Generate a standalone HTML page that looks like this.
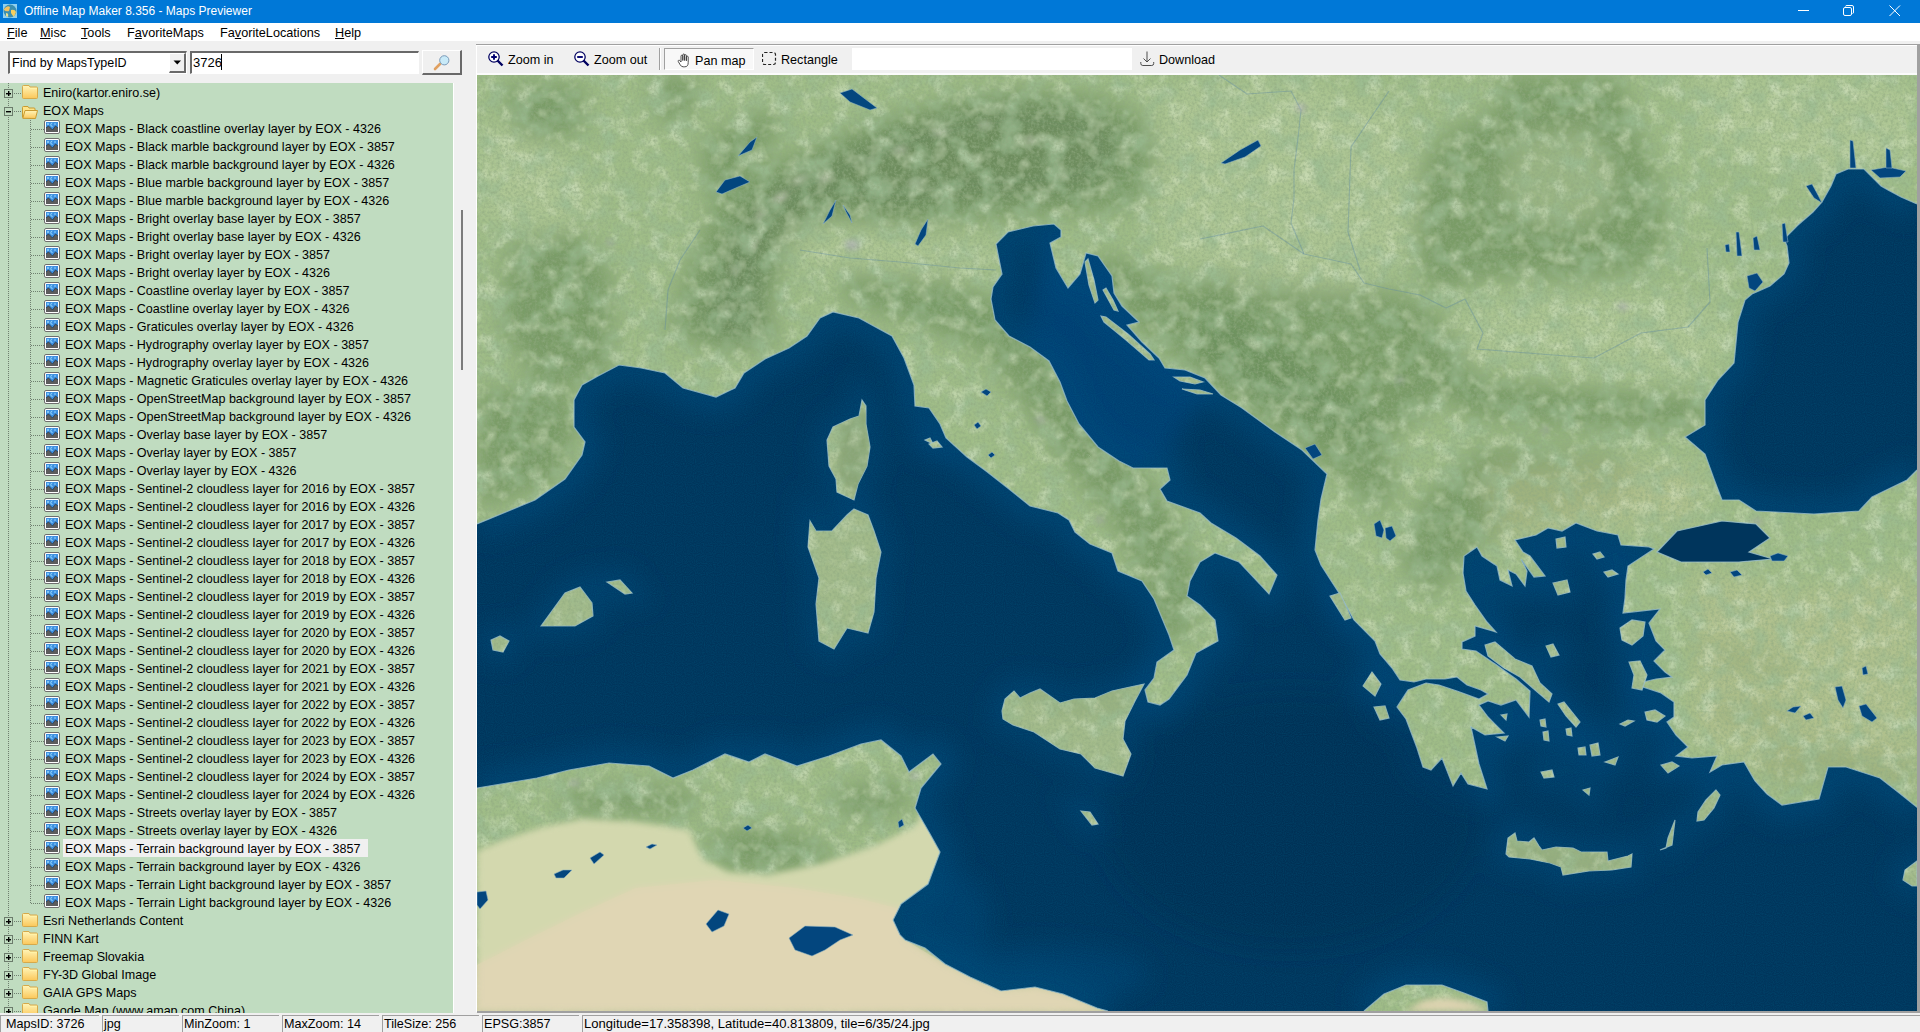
<!DOCTYPE html>
<html><head><meta charset="utf-8">
<style>
*{margin:0;padding:0;box-sizing:border-box}
html,body{width:1920px;height:1032px;overflow:hidden;background:#f0f0f0;font-family:"Liberation Sans",sans-serif;color:#000;position:relative}
.a{position:absolute}
#title{left:0;top:0;width:1920px;height:23px;background:#0078d7}
#title .tx{left:24px;top:4px;font-size:12px;color:#fff;white-space:pre}
#menu{left:0;top:23px;width:1920px;height:18px;background:#fff}
#menu span{position:absolute;top:3px;font-size:12.7px;white-space:pre}
u{text-decoration:underline;text-underline-offset:1px}
#tree{left:0;top:83px;width:453px;height:930px;background:#c0dcc0;overflow:hidden}
.r{position:absolute;left:0;width:453px;height:18px;margin-top:-83px}
.t{position:absolute;top:3px;font-size:12.55px;white-space:pre;line-height:14px}
.t.sel{background:#f0f0f0;left:63px!important;padding-left:2px;top:0;padding-top:3px;height:18px;width:305px}
.bx{position:absolute;left:4px;top:6px;width:9px;height:9px;border:1px solid #6b7b6b;background:#c0dcc0}
.bx .h{position:absolute;left:1px;top:3px;width:5px;height:1px;background:#000;box-shadow:0 0.4px 0 #000}
.bx .v{position:absolute;left:3px;top:1px;width:1px;height:5px;background:#000;box-shadow:0.4px 0 0 #000}
.hd{position:absolute;top:10px;height:1px;background-image:linear-gradient(90deg,#6f7f6f 50%,transparent 50%);background-size:2px 1px}
.ic{position:absolute}
#map{left:477px;top:75px;width:1441px;height:936px;overflow:hidden}
#status span{position:absolute;top:1017px;font-size:12.6px;white-space:pre;line-height:14px}
.sp{position:absolute;top:1015px;height:17px;border-top:1px solid #a0a0a0;border-left:1px solid #a0a0a0}
.tb span{position:absolute;font-size:12.6px;white-space:pre;top:53px}
</style></head><body>
<div id="title" class="a">
 <svg class="a" style="left:3px;top:4px" width="14" height="14" viewBox="0 0 14 14"><rect width="14" height="14" fill="#8fd0f0"/><circle cx="7" cy="7" r="6.5" fill="#3b8fb0"/><path d="M1 5 Q4 1 7 3 L6 7 Q3 8 1 6Z" fill="#f2c060"/><path d="M8 6 Q12 5 13 8 L11 13 Q9 11 8 9Z" fill="#f6d060"/><path d="M3 9 Q6 9 5 13 L3 12Z" fill="#e9e090"/></svg>
 <span class="a tx">Offline Map Maker 8.356 - Maps Previewer</span>
 <svg class="a" style="left:1798px;top:5px" width="14" height="12"><rect x="0" y="5" width="11" height="1" fill="#fff"/></svg>
 <svg class="a" style="left:1842px;top:4px" width="14" height="14"><rect x="1.5" y="3.5" width="8" height="8" rx="1.5" fill="none" stroke="#fff"/><path d="M3.5 2.5 Q3.5 1.5 5 1.5 L10 1.5 Q11.5 1.5 11.5 3 L11.5 8 Q11.5 9.5 10.5 9.5" fill="none" stroke="#fff"/></svg>
 <svg class="a" style="left:1889px;top:5px" width="14" height="14"><path d="M0.5 0.5 L11 11 M11 0.5 L0.5 11" stroke="#fff" stroke-width="1"/></svg>
</div>
<div id="menu" class="a">
 <span style="left:7px"><u>F</u>ile</span>
 <span style="left:40px"><u>M</u>isc</span>
 <span style="left:81px"><u>T</u>ools</span>
 <span style="left:127px">F<u>a</u>voriteMaps</span>
 <span style="left:220px">Fa<u>v</u>oriteLocations</span>
 <span style="left:335px"><u>H</u>elp</span>
</div>

<!-- left search -->
<div class="a" style="left:8px;top:51px;width:179px;height:23px;background:#fff;border-top:2px solid #696969;border-left:2px solid #696969;border-bottom:1px solid #fff;border-right:1px solid #fff"></div>
<span class="a" style="left:12px;top:56px;font-size:12.5px;white-space:pre">Find by MapsTypeID</span>
<div class="a" style="left:169px;top:53px;width:17px;height:20px;background:#f0f0f0;border-right:2px solid #696969;border-bottom:2px solid #696969;border-top:1px solid #fff;border-left:1px solid #fff"></div>
<svg class="a" style="left:173px;top:60px" width="9" height="5"><path d="M0.5 0.5 L8 0.5 L4.25 4.5Z" fill="#000"/></svg>
<div class="a" style="left:190px;top:51px;width:229px;height:23px;background:#fff;border-top:2px solid #696969;border-left:2px solid #696969;border-bottom:1px solid #fff;border-right:1px solid #fff"></div>
<span class="a" style="left:193px;top:55px;font-size:13px;white-space:pre">3726</span>
<div class="a" style="left:221px;top:54px;width:1px;height:16px;background:#000"></div>
<div class="a" style="left:422px;top:50px;width:40px;height:25px;background:#f0f0f0;border-top:1px solid #fff;border-left:1px solid #fff;border-right:2px solid #696969;border-bottom:2px solid #696969"></div>
<svg class="a" style="left:433px;top:54px" width="18" height="18" viewBox="0 0 18 18"><line x1="2" y1="15" x2="7" y2="10" stroke="#e0a060" stroke-width="2.6" stroke-linecap="round"/><circle cx="11.3" cy="6.3" r="4.6" fill="#c8eaf8" stroke="#7a9ab8" stroke-width="1"/></svg>

<div id="tree" class="a">
<div class="a" style="left:8px;top:0px;width:1px;height:930px;background-image:linear-gradient(#6f7f6f 50%,transparent 50%);background-size:1px 2px"></div>
<div class="a" style="left:30px;top:35px;width:1px;height:786px;background-image:linear-gradient(#6f7f6f 50%,transparent 50%);background-size:1px 2px"></div>
<svg width="0" height="0" style="position:absolute"><defs>
<linearGradient id="fg" x1="0" y1="0" x2="0" y2="1"><stop offset="0" stop-color="#fff5b8"/><stop offset="1" stop-color="#fbc75a"/></linearGradient>
<symbol id="fc" viewBox="0 0 16 14"><path d="M0.5 1.5 Q0.5 0.5 1.5 0.5 L7 0.5 L8 2 L14.5 2 Q15.5 2 15.5 3 L15.5 12.5 Q15.5 13.5 14.5 13.5 L1.5 13.5 Q0.5 13.5 0.5 12.5Z" fill="url(#fg)" stroke="#d6a94a"/><path d="M8 3.5 H15" stroke="#fff3a8" stroke-width="1"/></symbol>
<symbol id="fo" viewBox="0 0 16 13"><path d="M0.5 11.5 L0.5 1.5 Q0.5 0.5 1.5 0.5 L6 0.5 L7 2 L12 2 Q13 2 13 3 L13 4.5" fill="#fde48a" stroke="#c89a30"/><path d="M0.8 12.3 L3 4.5 L15.5 4.5 L13.5 12.5 Z" fill="url(#fg)" stroke="#c89a30"/></symbol>
<symbol id="im" viewBox="0 0 16 14"><rect x="0.5" y="0.5" width="15" height="13" rx="1.5" fill="#fff" stroke="#6e6e6e"/><rect x="2" y="2" width="12" height="10" fill="#3d8fe0"/><path d="M2 12 L2 8 L4.5 6 L8.5 10 L11.5 6 L14 8 L14 12Z" fill="#5c5c5c"/><path d="M2 8 L4.5 6 L8.5 10 L11.5 6 L14 8" fill="none" stroke="#2a3a4a" stroke-width="0.8"/><circle cx="4" cy="4" r="0.9" fill="#9fe0ff"/><path d="M8.3 3 A1.6 1.6 0 1 0 8.6 6.4" fill="none" stroke="#9fe0ff" stroke-width="0.9"/><circle cx="11" cy="4" r="0.8" fill="#9fe0ff"/></symbol>
</defs></svg>
<div class="r" style="top:83px"><i class="bx"><b class="h"></b><b class=v></b></i><i class="hd" style="left:14px;width:8px"></i><svg class="ic" style="left:22px;top:2px" width="16" height="14"><use href="#fc"/></svg><span class="t" style="left:43px">Eniro(kartor.eniro.se)</span></div>
<div class="r" style="top:101px"><i class="bx"><b class="h"></b></i><i class="hd" style="left:14px;width:8px"></i><svg class="ic" style="left:22px;top:5px" width="16" height="13"><use href="#fo"/></svg><span class="t" style="left:43px">EOX Maps</span></div>
<div class="r" style="top:119px"><i class="hd" style="left:31px;width:13px"></i><svg class="ic" style="left:44px;top:1px" width="16" height="14"><use href="#im"/></svg><span class="t" style="left:65px">EOX Maps - Black coastline overlay layer by EOX - 4326</span></div>
<div class="r" style="top:137px"><i class="hd" style="left:31px;width:13px"></i><svg class="ic" style="left:44px;top:1px" width="16" height="14"><use href="#im"/></svg><span class="t" style="left:65px">EOX Maps - Black marble background layer by EOX - 3857</span></div>
<div class="r" style="top:155px"><i class="hd" style="left:31px;width:13px"></i><svg class="ic" style="left:44px;top:1px" width="16" height="14"><use href="#im"/></svg><span class="t" style="left:65px">EOX Maps - Black marble background layer by EOX - 4326</span></div>
<div class="r" style="top:173px"><i class="hd" style="left:31px;width:13px"></i><svg class="ic" style="left:44px;top:1px" width="16" height="14"><use href="#im"/></svg><span class="t" style="left:65px">EOX Maps - Blue marble background layer by EOX - 3857</span></div>
<div class="r" style="top:191px"><i class="hd" style="left:31px;width:13px"></i><svg class="ic" style="left:44px;top:1px" width="16" height="14"><use href="#im"/></svg><span class="t" style="left:65px">EOX Maps - Blue marble background layer by EOX - 4326</span></div>
<div class="r" style="top:209px"><i class="hd" style="left:31px;width:13px"></i><svg class="ic" style="left:44px;top:1px" width="16" height="14"><use href="#im"/></svg><span class="t" style="left:65px">EOX Maps - Bright overlay base layer by EOX - 3857</span></div>
<div class="r" style="top:227px"><i class="hd" style="left:31px;width:13px"></i><svg class="ic" style="left:44px;top:1px" width="16" height="14"><use href="#im"/></svg><span class="t" style="left:65px">EOX Maps - Bright overlay base layer by EOX - 4326</span></div>
<div class="r" style="top:245px"><i class="hd" style="left:31px;width:13px"></i><svg class="ic" style="left:44px;top:1px" width="16" height="14"><use href="#im"/></svg><span class="t" style="left:65px">EOX Maps - Bright overlay layer by EOX - 3857</span></div>
<div class="r" style="top:263px"><i class="hd" style="left:31px;width:13px"></i><svg class="ic" style="left:44px;top:1px" width="16" height="14"><use href="#im"/></svg><span class="t" style="left:65px">EOX Maps - Bright overlay layer by EOX - 4326</span></div>
<div class="r" style="top:281px"><i class="hd" style="left:31px;width:13px"></i><svg class="ic" style="left:44px;top:1px" width="16" height="14"><use href="#im"/></svg><span class="t" style="left:65px">EOX Maps - Coastline overlay layer by EOX - 3857</span></div>
<div class="r" style="top:299px"><i class="hd" style="left:31px;width:13px"></i><svg class="ic" style="left:44px;top:1px" width="16" height="14"><use href="#im"/></svg><span class="t" style="left:65px">EOX Maps - Coastline overlay layer by EOX - 4326</span></div>
<div class="r" style="top:317px"><i class="hd" style="left:31px;width:13px"></i><svg class="ic" style="left:44px;top:1px" width="16" height="14"><use href="#im"/></svg><span class="t" style="left:65px">EOX Maps - Graticules overlay layer by EOX - 4326</span></div>
<div class="r" style="top:335px"><i class="hd" style="left:31px;width:13px"></i><svg class="ic" style="left:44px;top:1px" width="16" height="14"><use href="#im"/></svg><span class="t" style="left:65px">EOX Maps - Hydrography overlay layer by EOX - 3857</span></div>
<div class="r" style="top:353px"><i class="hd" style="left:31px;width:13px"></i><svg class="ic" style="left:44px;top:1px" width="16" height="14"><use href="#im"/></svg><span class="t" style="left:65px">EOX Maps - Hydrography overlay layer by EOX - 4326</span></div>
<div class="r" style="top:371px"><i class="hd" style="left:31px;width:13px"></i><svg class="ic" style="left:44px;top:1px" width="16" height="14"><use href="#im"/></svg><span class="t" style="left:65px">EOX Maps - Magnetic Graticules overlay layer by EOX - 4326</span></div>
<div class="r" style="top:389px"><i class="hd" style="left:31px;width:13px"></i><svg class="ic" style="left:44px;top:1px" width="16" height="14"><use href="#im"/></svg><span class="t" style="left:65px">EOX Maps - OpenStreetMap background layer by EOX - 3857</span></div>
<div class="r" style="top:407px"><i class="hd" style="left:31px;width:13px"></i><svg class="ic" style="left:44px;top:1px" width="16" height="14"><use href="#im"/></svg><span class="t" style="left:65px">EOX Maps - OpenStreetMap background layer by EOX - 4326</span></div>
<div class="r" style="top:425px"><i class="hd" style="left:31px;width:13px"></i><svg class="ic" style="left:44px;top:1px" width="16" height="14"><use href="#im"/></svg><span class="t" style="left:65px">EOX Maps - Overlay base layer by EOX - 3857</span></div>
<div class="r" style="top:443px"><i class="hd" style="left:31px;width:13px"></i><svg class="ic" style="left:44px;top:1px" width="16" height="14"><use href="#im"/></svg><span class="t" style="left:65px">EOX Maps - Overlay layer by EOX - 3857</span></div>
<div class="r" style="top:461px"><i class="hd" style="left:31px;width:13px"></i><svg class="ic" style="left:44px;top:1px" width="16" height="14"><use href="#im"/></svg><span class="t" style="left:65px">EOX Maps - Overlay layer by EOX - 4326</span></div>
<div class="r" style="top:479px"><i class="hd" style="left:31px;width:13px"></i><svg class="ic" style="left:44px;top:1px" width="16" height="14"><use href="#im"/></svg><span class="t" style="left:65px">EOX Maps - Sentinel-2 cloudless layer for 2016 by EOX - 3857</span></div>
<div class="r" style="top:497px"><i class="hd" style="left:31px;width:13px"></i><svg class="ic" style="left:44px;top:1px" width="16" height="14"><use href="#im"/></svg><span class="t" style="left:65px">EOX Maps - Sentinel-2 cloudless layer for 2016 by EOX - 4326</span></div>
<div class="r" style="top:515px"><i class="hd" style="left:31px;width:13px"></i><svg class="ic" style="left:44px;top:1px" width="16" height="14"><use href="#im"/></svg><span class="t" style="left:65px">EOX Maps - Sentinel-2 cloudless layer for 2017 by EOX - 3857</span></div>
<div class="r" style="top:533px"><i class="hd" style="left:31px;width:13px"></i><svg class="ic" style="left:44px;top:1px" width="16" height="14"><use href="#im"/></svg><span class="t" style="left:65px">EOX Maps - Sentinel-2 cloudless layer for 2017 by EOX - 4326</span></div>
<div class="r" style="top:551px"><i class="hd" style="left:31px;width:13px"></i><svg class="ic" style="left:44px;top:1px" width="16" height="14"><use href="#im"/></svg><span class="t" style="left:65px">EOX Maps - Sentinel-2 cloudless layer for 2018 by EOX - 3857</span></div>
<div class="r" style="top:569px"><i class="hd" style="left:31px;width:13px"></i><svg class="ic" style="left:44px;top:1px" width="16" height="14"><use href="#im"/></svg><span class="t" style="left:65px">EOX Maps - Sentinel-2 cloudless layer for 2018 by EOX - 4326</span></div>
<div class="r" style="top:587px"><i class="hd" style="left:31px;width:13px"></i><svg class="ic" style="left:44px;top:1px" width="16" height="14"><use href="#im"/></svg><span class="t" style="left:65px">EOX Maps - Sentinel-2 cloudless layer for 2019 by EOX - 3857</span></div>
<div class="r" style="top:605px"><i class="hd" style="left:31px;width:13px"></i><svg class="ic" style="left:44px;top:1px" width="16" height="14"><use href="#im"/></svg><span class="t" style="left:65px">EOX Maps - Sentinel-2 cloudless layer for 2019 by EOX - 4326</span></div>
<div class="r" style="top:623px"><i class="hd" style="left:31px;width:13px"></i><svg class="ic" style="left:44px;top:1px" width="16" height="14"><use href="#im"/></svg><span class="t" style="left:65px">EOX Maps - Sentinel-2 cloudless layer for 2020 by EOX - 3857</span></div>
<div class="r" style="top:641px"><i class="hd" style="left:31px;width:13px"></i><svg class="ic" style="left:44px;top:1px" width="16" height="14"><use href="#im"/></svg><span class="t" style="left:65px">EOX Maps - Sentinel-2 cloudless layer for 2020 by EOX - 4326</span></div>
<div class="r" style="top:659px"><i class="hd" style="left:31px;width:13px"></i><svg class="ic" style="left:44px;top:1px" width="16" height="14"><use href="#im"/></svg><span class="t" style="left:65px">EOX Maps - Sentinel-2 cloudless layer for 2021 by EOX - 3857</span></div>
<div class="r" style="top:677px"><i class="hd" style="left:31px;width:13px"></i><svg class="ic" style="left:44px;top:1px" width="16" height="14"><use href="#im"/></svg><span class="t" style="left:65px">EOX Maps - Sentinel-2 cloudless layer for 2021 by EOX - 4326</span></div>
<div class="r" style="top:695px"><i class="hd" style="left:31px;width:13px"></i><svg class="ic" style="left:44px;top:1px" width="16" height="14"><use href="#im"/></svg><span class="t" style="left:65px">EOX Maps - Sentinel-2 cloudless layer for 2022 by EOX - 3857</span></div>
<div class="r" style="top:713px"><i class="hd" style="left:31px;width:13px"></i><svg class="ic" style="left:44px;top:1px" width="16" height="14"><use href="#im"/></svg><span class="t" style="left:65px">EOX Maps - Sentinel-2 cloudless layer for 2022 by EOX - 4326</span></div>
<div class="r" style="top:731px"><i class="hd" style="left:31px;width:13px"></i><svg class="ic" style="left:44px;top:1px" width="16" height="14"><use href="#im"/></svg><span class="t" style="left:65px">EOX Maps - Sentinel-2 cloudless layer for 2023 by EOX - 3857</span></div>
<div class="r" style="top:749px"><i class="hd" style="left:31px;width:13px"></i><svg class="ic" style="left:44px;top:1px" width="16" height="14"><use href="#im"/></svg><span class="t" style="left:65px">EOX Maps - Sentinel-2 cloudless layer for 2023 by EOX - 4326</span></div>
<div class="r" style="top:767px"><i class="hd" style="left:31px;width:13px"></i><svg class="ic" style="left:44px;top:1px" width="16" height="14"><use href="#im"/></svg><span class="t" style="left:65px">EOX Maps - Sentinel-2 cloudless layer for 2024 by EOX - 3857</span></div>
<div class="r" style="top:785px"><i class="hd" style="left:31px;width:13px"></i><svg class="ic" style="left:44px;top:1px" width="16" height="14"><use href="#im"/></svg><span class="t" style="left:65px">EOX Maps - Sentinel-2 cloudless layer for 2024 by EOX - 4326</span></div>
<div class="r" style="top:803px"><i class="hd" style="left:31px;width:13px"></i><svg class="ic" style="left:44px;top:1px" width="16" height="14"><use href="#im"/></svg><span class="t" style="left:65px">EOX Maps - Streets overlay layer by EOX - 3857</span></div>
<div class="r" style="top:821px"><i class="hd" style="left:31px;width:13px"></i><svg class="ic" style="left:44px;top:1px" width="16" height="14"><use href="#im"/></svg><span class="t" style="left:65px">EOX Maps - Streets overlay layer by EOX - 4326</span></div>
<div class="r" style="top:839px"><i class="hd" style="left:31px;width:13px"></i><svg class="ic" style="left:44px;top:1px" width="16" height="14"><use href="#im"/></svg><span class="t sel" style="left:65px">EOX Maps - Terrain background layer by EOX - 3857</span></div>
<div class="r" style="top:857px"><i class="hd" style="left:31px;width:13px"></i><svg class="ic" style="left:44px;top:1px" width="16" height="14"><use href="#im"/></svg><span class="t" style="left:65px">EOX Maps - Terrain background layer by EOX - 4326</span></div>
<div class="r" style="top:875px"><i class="hd" style="left:31px;width:13px"></i><svg class="ic" style="left:44px;top:1px" width="16" height="14"><use href="#im"/></svg><span class="t" style="left:65px">EOX Maps - Terrain Light background layer by EOX - 3857</span></div>
<div class="r" style="top:893px"><i class="hd" style="left:31px;width:13px"></i><svg class="ic" style="left:44px;top:1px" width="16" height="14"><use href="#im"/></svg><span class="t" style="left:65px">EOX Maps - Terrain Light background layer by EOX - 4326</span></div>
<div class="r" style="top:911px"><i class="bx"><b class="h"></b><b class=v></b></i><i class="hd" style="left:14px;width:8px"></i><svg class="ic" style="left:22px;top:2px" width="16" height="14"><use href="#fc"/></svg><span class="t" style="left:43px">Esri Netherlands Content</span></div>
<div class="r" style="top:929px"><i class="bx"><b class="h"></b><b class=v></b></i><i class="hd" style="left:14px;width:8px"></i><svg class="ic" style="left:22px;top:2px" width="16" height="14"><use href="#fc"/></svg><span class="t" style="left:43px">FINN Kart</span></div>
<div class="r" style="top:947px"><i class="bx"><b class="h"></b><b class=v></b></i><i class="hd" style="left:14px;width:8px"></i><svg class="ic" style="left:22px;top:2px" width="16" height="14"><use href="#fc"/></svg><span class="t" style="left:43px">Freemap Slovakia</span></div>
<div class="r" style="top:965px"><i class="bx"><b class="h"></b><b class=v></b></i><i class="hd" style="left:14px;width:8px"></i><svg class="ic" style="left:22px;top:2px" width="16" height="14"><use href="#fc"/></svg><span class="t" style="left:43px">FY-3D Global Image</span></div>
<div class="r" style="top:983px"><i class="bx"><b class="h"></b><b class=v></b></i><i class="hd" style="left:14px;width:8px"></i><svg class="ic" style="left:22px;top:2px" width="16" height="14"><use href="#fc"/></svg><span class="t" style="left:43px">GAIA GPS Maps</span></div>
<div class="r" style="top:1001px"><i class="bx"><b class="h"></b><b class=v></b></i><i class="hd" style="left:14px;width:8px"></i><svg class="ic" style="left:22px;top:2px" width="16" height="14"><use href="#fc"/></svg><span class="t" style="left:43px">Gaode Map (www.amap.com China)</span></div>
</div>
</div>
<div class="a" style="left:453px;top:83px;width:1px;height:930px;background:#fff"></div>
<div class="a" style="left:461px;top:210px;width:2px;height:160px;background:#7c7c7c"></div>

<!-- right toolbar -->
<div class="a" style="left:476px;top:44px;width:1444px;height:1px;background:#a0a0a0"></div>
<div class="a" style="left:476px;top:45px;width:1444px;height:1px;background:#fff"></div>
<div class="tb">
<svg class="a" style="left:488px;top:51px" width="16" height="16" viewBox="0 0 16 16"><circle cx="6" cy="6" r="5.2" fill="#fff" stroke="#000060" stroke-width="1.25"/><path d="M3.2 6 H8.8 M6 3.2 V8.8" stroke="#000070" stroke-width="1.9"/><line x1="9.5" y1="9.5" x2="14.5" y2="14.5" stroke="#000060" stroke-width="2.4"/></svg>
<span style="left:508px">Zoom in</span>
<svg class="a" style="left:574px;top:51px" width="16" height="16" viewBox="0 0 16 16"><circle cx="6" cy="6" r="5.2" fill="#fff" stroke="#000060" stroke-width="1.25"/><path d="M3.2 6 H8.8" stroke="#000070" stroke-width="1.9"/><line x1="9.5" y1="9.5" x2="14.5" y2="14.5" stroke="#000060" stroke-width="2.4"/></svg>
<span style="left:594px">Zoom out</span>
<div class="a" style="left:659px;top:48px;width:1px;height:22px;background:#a0a0a0"></div>
<div class="a" style="left:660px;top:48px;width:1px;height:22px;background:#fff"></div>
<div class="a" style="left:664px;top:48px;width:90px;height:22px;background:#f8f8f8;border-top:1px solid #a0a0a0;border-left:1px solid #a0a0a0;border-right:1px solid #fff;border-bottom:1px solid #fff"></div>
<svg class="a" style="left:677px;top:53px" width="13" height="15" viewBox="0 0 13 15"><path d="M4 9 L4 3.2 Q4 2.2 4.9 2.2 Q5.8 2.2 5.8 3.2 L5.8 7.5 L5.8 2 Q5.8 1 6.7 1 Q7.6 1 7.6 2 L7.6 7.5 L7.6 2.6 Q7.6 1.7 8.5 1.7 Q9.4 1.7 9.4 2.6 L9.4 7.8 L9.4 4 Q9.4 3.2 10.3 3.2 Q11.2 3.2 11.2 4 L11.2 9.5 Q11.2 13.8 7.8 13.8 L6.2 13.8 Q4.3 13.8 3.2 11.8 L1.3 8.6 Q0.8 7.6 1.6 7.3 Q2.4 7 3.1 7.9 Z" fill="#fff" stroke="#3a3a3a" stroke-width="0.9" stroke-linejoin="round"/></svg>
<span style="left:695px;top:54px">Pan map</span>
<svg class="a" style="left:762px;top:52px" width="15" height="14"><rect x="0.5" y="0.5" width="13" height="12" rx="2" fill="none" stroke="#222" stroke-width="1.2" stroke-dasharray="3 2"/></svg>
<span style="left:781px">Rectangle</span>
<div class="a" style="left:852px;top:48px;width:280px;height:22px;background:#fff"></div>
<svg class="a" style="left:1140px;top:51px" width="15" height="16" viewBox="0 0 15 16"><path d="M7 0.5 V11 M3.5 7.5 L7 11 L10.5 7.5 M0.8 11 V12.5 Q0.8 14.5 2.8 14.5 L11.7 14.5 Q13.7 14.5 13.7 12.5 V11" fill="none" stroke="#444" stroke-width="0.95"/></svg>
<span style="left:1159px">Download</span>
</div>

<div class="a" style="left:476px;top:73px;width:1442px;height:2px;background:#fbfbfb"></div>
<div id="map" class="a">
<svg width="1441" height="936" viewBox="477 75 1441 936" style="display:block">
<defs>
<filter id="bl" x="-50%" y="-50%" width="200%" height="200%"><feGaussianBlur stdDeviation="12"/></filter>
<filter id="bl2" x="-50%" y="-50%" width="200%" height="200%"><feGaussianBlur stdDeviation="3"/></filter>
<filter id="mt" x="0" y="0" width="100%" height="100%"><feTurbulence type="fractalNoise" baseFrequency="0.045" numOctaves="3" seed="7"/><feColorMatrix type="matrix" values="0 0 0 0 0.33  0 0 0 0 0.50  0 0 0 0 0.29  3.2 0 0 0 -1.45"/></filter>
<filter id="sn" x="0" y="0" width="100%" height="100%"><feTurbulence type="fractalNoise" baseFrequency="0.9" numOctaves="1" seed="11"/><feColorMatrix type="matrix" values="0 0 0 0 0.0  0 0 0 0 0.15  0 0 0 0 0.28  0.45 0 0 0 -0.15"/></filter>
<filter id="lt" x="0" y="0" width="100%" height="100%"><feTurbulence type="fractalNoise" baseFrequency="0.06" numOctaves="3" seed="21"/><feColorMatrix type="matrix" values="0 0 0 0 0.76  0 0 0 0 0.85  0 0 0 0 0.64  3.0 0 0 0 -1.45"/></filter>
<filter id="nz" x="0" y="0" width="100%" height="100%"><feTurbulence type="fractalNoise" baseFrequency="0.35" numOctaves="3" seed="3"/><feColorMatrix type="matrix" values="0 0 0 0 0.28  0 0 0 0 0.40  0 0 0 0 0.22  1.6 0 0 0 -0.62"/></filter>
</defs>
<rect x="477" y="75" width="1441" height="936" fill="#a0bd88"/>
<g filter="url(#bl)">
<polygon points="666,334 680,290 691,258 721,191 782,160 874,121 960,98 1017,90 1100,95 1150,120 1160,170 1142,207 1080,215 1017,218 904,228 828,218 782,252 767,319 782,344 721,350" fill="#6b8f5c" opacity="0.72"/>
<polygon points="700,140 760,110 790,120 740,180 705,200" fill="#6b8f5c" opacity="0.72"/>
<polygon points="501,84 584,84 584,136 520,140" fill="#6b8f5c" opacity="0.72"/>
<polygon points="650,75 700,75 690,120 660,125" fill="#6b8f5c" opacity="0.72"/>
<polygon points="508,243 580,230 614,280 610,380 540,385 500,330" fill="#6b8f5c" opacity="0.72"/>
<polygon points="843,273 950,280 1017,310 1060,360 1100,420 1140,470 1180,520 1200,580 1190,640 1160,640 1140,580 1110,520 1060,460 1020,400 980,350 900,320 843,300" fill="#6b8f5c" opacity="0.72"/>
<polygon points="1100,250 1180,280 1260,330 1330,380 1380,430 1400,480 1380,520 1330,470 1260,420 1200,380 1140,330 1090,290" fill="#6b8f5c" opacity="0.72"/>
<polygon points="1499,75 1619,75 1641,138 1666,195 1666,251 1641,270 1578,280 1515,277 1468,283 1439,295 1420,277 1414,210 1427,154 1452,129 1499,110" fill="#6b8f5c" opacity="0.72"/>
<polygon points="1200,270 1330,280 1420,300 1460,340 1480,404 1440,400 1380,446 1300,420 1200,360" fill="#6b8f5c" opacity="0.72"/>
<polygon points="1462,376 1586,388 1709,396 1709,429 1586,429 1462,417" fill="#6b8f5c" opacity="0.72"/>
<polygon points="1483,446 1627,454 1627,500 1540,520 1483,540 1430,600 1400,560 1420,500" fill="#6b8f5c" opacity="0.72"/>
<polygon points="700,835 760,825 820,840 840,860 790,872 730,872" fill="#6b8f5c" opacity="0.72"/>
<polygon points="560,790 640,785 700,790 690,815 600,815 560,810" fill="#6b8f5c" opacity="0.72"/>
<polygon points="830,790 900,780 915,800 880,820 835,815" fill="#6b8f5c" opacity="0.72"/>
<polygon points="477,390 560,385 580,420 560,480 477,510" fill="#6b8f5c" opacity="0.72"/>
<polygon points="1760,745 1830,740 1917,760 1917,800 1880,780 1830,775 1790,790 1760,775" fill="#6b8f5c" opacity="0.72"/>
<polygon points="1690,640 1760,650 1800,670 1790,685 1740,672 1690,660" fill="#6b8f5c" opacity="0.72"/>
<polygon points="1700,700 1770,705 1800,720 1780,732 1720,722" fill="#6b8f5c" opacity="0.72"/>
<polygon points="830,420 870,420 870,500 830,480" fill="#6b8f5c" opacity="0.72"/>
<polygon points="700,330 712,290 722,250 745,205 790,170 850,145 900,125 960,108 1017,100 1080,108 1120,130 1120,170 1080,195 1017,200 950,205 900,215 850,205 810,215 780,240 765,290 770,330 740,345" fill="#6b8a5c" opacity="0.8"/>
<polygon points="1690,570 1800,590 1917,570 1917,800 1840,770 1780,790 1740,760 1690,740" fill="#bdc594" opacity="0.55"/>
<polygon points="1480,470 1600,460 1700,470 1700,520 1600,530 1500,540" fill="#bdc594" opacity="0.55"/>
<polygon points="1509,140 1590,130 1615,170 1600,220 1546,226 1502,201 1510,165" fill="#bccfa0" opacity="0.5"/>
<polygon points="782,228 880,232 996,240 990,273 900,270 800,262" fill="#bccfa0" opacity="0.5"/>
<polygon points="1157,91 1300,80 1409,110 1409,250 1350,296 1250,290 1157,250" fill="#bccfa0" opacity="0.5"/>
<polygon points="1462,306 1560,300 1700,300 1740,330 1700,380 1560,370 1460,350" fill="#bccfa0" opacity="0.5"/>
<polygon points="1690,75 1917,75 1917,160 1800,180 1700,140" fill="#bccfa0" opacity="0.5"/>
<polygon points="477,120 560,150 600,200 560,230 477,220" fill="#bccfa0" opacity="0.5"/>
</g>
<g filter="url(#bl2)"><ellipse cx="780" cy="198" rx="10" ry="4" transform="rotate(-35 780 198)" fill="#d0d0c4" opacity="0.75"/><ellipse cx="800" cy="180" rx="9" ry="3" transform="rotate(-30 800 180)" fill="#d0d0c4" opacity="0.75"/><ellipse cx="825" cy="178" rx="8" ry="3" transform="rotate(-20 825 178)" fill="#d0d0c4" opacity="0.75"/><ellipse cx="760" cy="215" rx="6" ry="3" transform="rotate(-50 760 215)" fill="#d0d0c4" opacity="0.75"/><ellipse cx="752" cy="245" rx="7" ry="3" transform="rotate(-60 752 245)" fill="#d0d0c4" opacity="0.75"/><ellipse cx="735" cy="270" rx="5" ry="3" transform="rotate(-70 735 270)" fill="#d0d0c4" opacity="0.75"/><ellipse cx="900" cy="150" rx="8" ry="3" transform="rotate(-10 900 150)" fill="#d0d0c4" opacity="0.75"/><ellipse cx="940" cy="132" rx="9" ry="3" transform="rotate(-5 940 132)" fill="#d0d0c4" opacity="0.75"/><ellipse cx="985" cy="125" rx="7" ry="3" transform="rotate(0 985 125)" fill="#d0d0c4" opacity="0.75"/><ellipse cx="1030" cy="140" rx="6" ry="3" transform="rotate(0 1030 140)" fill="#d0d0c4" opacity="0.75"/><ellipse cx="870" cy="162" rx="6" ry="2" transform="rotate(-20 870 162)" fill="#d0d0c4" opacity="0.75"/><ellipse cx="915" cy="183" rx="7" ry="3" transform="rotate(-15 915 183)" fill="#d0d0c4" opacity="0.75"/></g>
<rect x="477" y="75" width="1441" height="936" filter="url(#mt)" opacity="0.75"/>
<rect x="477" y="75" width="1441" height="936" filter="url(#lt)" opacity="0.45"/>
<rect x="477" y="75" width="1441" height="936" filter="url(#nz)" opacity="0.9"/>
<g filter="url(#bl2)"><polygon points="477,851 503,840 543,827 583,819 636,822 689,830 702,859 728,872 768,875 821,864 874,846 914,827 927,806 935,800 945,860 930,890 900,935 945,964 970,977 1001,991 1035,987 1063,994 1097,1008 1108,1011 477,1011" fill="#d3d8ae" /><polygon points="477,965 530,938 583,912 636,888 715,880 795,888 861,899 900,909 905,940 945,964 970,977 1001,991 1035,987 1063,994 1097,1008 1108,1011 477,1011" fill="#e0d6b4" /></g>
<polygon points="477,965 530,938 583,912 636,888 715,880 795,888 861,899 900,909 905,940 945,964 970,977 1001,991 1035,987 1063,994 1097,1008 1108,1011 477,1011" fill="#e0d6b4" opacity="0.6"/>
<g filter="url(#bl2)"><polygon points="1405,1011 1425,1000 1450,998 1472,1003 1490,1011" fill="#ddd3b0" /></g>
<g fill="none" stroke="#5f8aa0" stroke-width="1.2" stroke-opacity="0.4" stroke-linejoin="round"><polyline points="1219,75 1247,94 1291,91 1301,110 1298,138 1294,170 1294,198 1291,223 1304,254 1351,264 1364,283 1389,289 1420,295 1446,308 1465,299 1483,333 1477,349 1515,352 1553,355 1594,358 1641,333 1688,327 1710,302 1707,248"/><polyline points="1200,239 1263,226 1304,254"/><polyline points="1389,91 1351,147 1348,232 1360,270"/><polyline points="800,250 850,258 900,262 960,268 996,270"/><polyline points="665,330 668,290 680,260 700,230"/></g>
<g fill="#a8a8b0" opacity="0.7" filter="url(#bl2)"><ellipse cx="1301" cy="108" rx="5" ry="4"/><ellipse cx="1623" cy="307" rx="5" ry="4"/><ellipse cx="1510" cy="705" rx="5" ry="5"/><ellipse cx="1757" cy="522" rx="6" ry="3"/><ellipse cx="852" cy="245" rx="7" ry="5"/><ellipse cx="1040" cy="420" rx="4" ry="3"/><ellipse cx="1100" cy="520" rx="4" ry="3"/><ellipse cx="610" cy="243" rx="3" ry="3"/><ellipse cx="1545" cy="430" rx="3" ry="3"/><ellipse cx="914" cy="776" rx="4" ry="3"/><ellipse cx="575" cy="783" rx="5" ry="3"/><ellipse cx="1400" cy="380" rx="3" ry="3"/></g>
<g fill="#00355c">
<polygon points="477,524 535,500 565,479 582,455 585,442 574,427 574,400 582,385 598,376 619,365 641,368 665,373 683,388 716,397 735,388 744,373 765,359 789,348 807,336 820,318 833,312 859,318 892,336 904,358 914,385 915,406 929,408 940,424 946,438 967,457 986,471 1009,489 1030,506 1058,513 1069,520 1075,532 1090,544 1112,553 1118,571 1142,581 1154,599 1169,635 1174,650 1157,662 1154,678 1145,690 1148,702 1160,705 1169,699 1187,675 1196,653 1218,641 1215,620 1200,605 1187,596 1190,581 1200,562 1215,553 1239,562 1257,581 1269,594 1277,575 1260,556 1236,538 1211,523 1200,513 1167,501 1160,489 1170,480 1167,468 1151,468 1133,468 1119,461 1098,447 1079,424 1067,401 1060,382 1049,361 1030,347 1009,336 995,320 991,299 993,287 1002,274 996,244 1008,232 1033,226 1054,224 1061,230 1061,237 1050,243 1051,247 1056,268 1068,288 1080,274 1086,253 1098,256 1112,276 1114,293 1122,306 1139,322 1127,325 1142,342 1159,358 1165,368 1185,370 1205,378 1221,395 1242,408 1275,432 1302,450 1327,474 1321,499 1318,520 1315,550 1321,565 1339,593 1354,620 1375,641 1380,654 1392,668 1400,680 1414,682 1426,679 1445,679 1457,677 1467,685 1481,690 1488,694 1479,699 1457,691 1439,685 1426,683 1408,690 1397,707 1406,719 1417,748 1423,767 1431,770 1442,758 1453,786 1461,773 1468,784 1487,789 1479,764 1471,727 1485,735 1504,733 1488,717 1479,705 1488,701 1501,705 1516,700 1529,717 1530,691 1516,679 1498,666 1476,651 1462,649 1462,642 1475,636 1475,626 1496,632 1487,622 1475,605 1466,591 1463,573 1464,556 1477,547 1482,556 1497,566 1500,580 1512,586 1508,570 1516,574 1525,586 1527,571 1521,559 1534,577 1545,576 1530,556 1523,552 1515,540 1536,535 1548,528 1562,531 1576,523 1597,531 1618,535 1621,545 1649,547 1654,549 1628,566 1626,580 1625,598 1623,613 1660,609 1649,623 1656,641 1665,650 1654,661 1665,672 1672,677 1656,679 1634,684 1661,693 1674,702 1674,717 1667,722 1676,735 1688,747 1676,756 1692,758 1717,756 1710,772 1722,765 1744,762 1755,781 1767,794 1782,805 1819,799 1828,767 1846,767 1880,778 1898,792 1918,808 1918,1011 1488,1011 1487,1002 1464,993 1442,985 1422,985 1406,985 1384,994 1364,1011 1108,1011 1097,1008 1063,994 1035,987 1001,991 970,977 945,964 925,948 905,940 900,935 893,920 901,904 928,884 940,852 930,834 915,808 921,788 941,764 933,754 909,772 901,756 881,740 861,744 829,756 797,766 765,754 749,762 725,754 693,770 673,778 649,766 609,763 569,770 537,778 477,788"/><polygon points="1917,204 1901,197 1888,190 1881,186 1864,169 1848,169 1836,174 1831,186 1822,202 1813,212 1798,225 1784,239 1787,246 1789,263 1784,274 1770,286 1752,294 1745,300 1738,322 1734,363 1718,380 1705,400 1705,425 1685,437 1705,454 1714,479 1722,500 1739,500 1756,511 1814,514 1859,511 1872,497 1907,480 1917,470"/><polygon points="1657,552 1677,531 1722,521 1756,524 1770,538 1749,552 1773,559 1739,562 1708,562 1681,562"/>
</g>
<clipPath id="sc"><polygon points="477,524 535,500 565,479 582,455 585,442 574,427 574,400 582,385 598,376 619,365 641,368 665,373 683,388 716,397 735,388 744,373 765,359 789,348 807,336 820,318 833,312 859,318 892,336 904,358 914,385 915,406 929,408 940,424 946,438 967,457 986,471 1009,489 1030,506 1058,513 1069,520 1075,532 1090,544 1112,553 1118,571 1142,581 1154,599 1169,635 1174,650 1157,662 1154,678 1145,690 1148,702 1160,705 1169,699 1187,675 1196,653 1218,641 1215,620 1200,605 1187,596 1190,581 1200,562 1215,553 1239,562 1257,581 1269,594 1277,575 1260,556 1236,538 1211,523 1200,513 1167,501 1160,489 1170,480 1167,468 1151,468 1133,468 1119,461 1098,447 1079,424 1067,401 1060,382 1049,361 1030,347 1009,336 995,320 991,299 993,287 1002,274 996,244 1008,232 1033,226 1054,224 1061,230 1061,237 1050,243 1051,247 1056,268 1068,288 1080,274 1086,253 1098,256 1112,276 1114,293 1122,306 1139,322 1127,325 1142,342 1159,358 1165,368 1185,370 1205,378 1221,395 1242,408 1275,432 1302,450 1327,474 1321,499 1318,520 1315,550 1321,565 1339,593 1354,620 1375,641 1380,654 1392,668 1400,680 1414,682 1426,679 1445,679 1457,677 1467,685 1481,690 1488,694 1479,699 1457,691 1439,685 1426,683 1408,690 1397,707 1406,719 1417,748 1423,767 1431,770 1442,758 1453,786 1461,773 1468,784 1487,789 1479,764 1471,727 1485,735 1504,733 1488,717 1479,705 1488,701 1501,705 1516,700 1529,717 1530,691 1516,679 1498,666 1476,651 1462,649 1462,642 1475,636 1475,626 1496,632 1487,622 1475,605 1466,591 1463,573 1464,556 1477,547 1482,556 1497,566 1500,580 1512,586 1508,570 1516,574 1525,586 1527,571 1521,559 1534,577 1545,576 1530,556 1523,552 1515,540 1536,535 1548,528 1562,531 1576,523 1597,531 1618,535 1621,545 1649,547 1654,549 1628,566 1626,580 1625,598 1623,613 1660,609 1649,623 1656,641 1665,650 1654,661 1665,672 1672,677 1656,679 1634,684 1661,693 1674,702 1674,717 1667,722 1676,735 1688,747 1676,756 1692,758 1717,756 1710,772 1722,765 1744,762 1755,781 1767,794 1782,805 1819,799 1828,767 1846,767 1880,778 1898,792 1918,808 1918,1011 1488,1011 1487,1002 1464,993 1442,985 1422,985 1406,985 1384,994 1364,1011 1108,1011 1097,1008 1063,994 1035,987 1001,991 970,977 945,964 925,948 905,940 900,935 893,920 901,904 928,884 940,852 930,834 915,808 921,788 941,764 933,754 909,772 901,756 881,740 861,744 829,756 797,766 765,754 749,762 725,754 693,770 673,778 649,766 609,763 569,770 537,778 477,788"/><polygon points="1917,204 1901,197 1888,190 1881,186 1864,169 1848,169 1836,174 1831,186 1822,202 1813,212 1798,225 1784,239 1787,246 1789,263 1784,274 1770,286 1752,294 1745,300 1738,322 1734,363 1718,380 1705,400 1705,425 1685,437 1705,454 1714,479 1722,500 1739,500 1756,511 1814,514 1859,511 1872,497 1907,480 1917,470"/></clipPath>
<g clip-path="url(#sc)"><g filter="url(#bl)">
<g fill="none" stroke="#034474" stroke-width="34" stroke-opacity="0.75" stroke-linejoin="round"><polyline points="477,524 535,500 565,479 582,455 585,442 574,427 574,400 582,385 598,376 619,365 641,368 665,373 683,388 716,397 735,388 744,373 765,359 789,348 807,336 820,318 833,312 859,318 892,336 904,358 914,385 915,406 929,408 940,424 946,438 967,457 986,471 1009,489 1030,506 1058,513 1069,520 1075,532 1090,544 1112,553 1118,571 1142,581 1154,599 1169,635 1174,650 1157,662 1154,678 1145,690 1148,702 1160,705 1169,699 1187,675 1196,653 1218,641 1215,620 1200,605 1187,596 1190,581 1200,562 1215,553 1239,562 1257,581 1269,594 1277,575 1260,556 1236,538 1211,523 1200,513 1167,501 1160,489 1170,480 1167,468 1151,468 1133,468 1119,461 1098,447 1079,424 1067,401 1060,382 1049,361 1030,347 1009,336 995,320 991,299 993,287 1002,274 996,244 1008,232 1033,226 1054,224 1061,230 1061,237 1050,243 1051,247 1056,268 1068,288 1080,274 1086,253 1098,256 1112,276 1114,293 1122,306 1139,322 1127,325 1142,342 1159,358 1165,368 1185,370 1205,378 1221,395 1242,408 1275,432 1302,450 1327,474 1321,499 1318,520 1315,550 1321,565 1339,593 1354,620 1375,641 1380,654 1392,668 1400,680 1414,682 1426,679 1445,679 1457,677 1467,685 1481,690 1488,694 1479,699 1457,691 1439,685 1426,683 1408,690 1397,707 1406,719 1417,748 1423,767 1431,770 1442,758 1453,786 1461,773 1468,784 1487,789 1479,764 1471,727 1485,735 1504,733 1488,717 1479,705 1488,701 1501,705 1516,700 1529,717 1530,691 1516,679 1498,666 1476,651 1462,649 1462,642 1475,636 1475,626 1496,632 1487,622 1475,605 1466,591 1463,573 1464,556 1477,547 1482,556 1497,566 1500,580 1512,586 1508,570 1516,574 1525,586 1527,571 1521,559 1534,577 1545,576 1530,556 1523,552 1515,540 1536,535 1548,528 1562,531 1576,523 1597,531 1618,535 1621,545 1649,547 1654,549 1628,566 1626,580 1625,598 1623,613 1660,609 1649,623 1656,641 1665,650 1654,661 1665,672 1672,677 1656,679 1634,684 1661,693 1674,702 1674,717 1667,722 1676,735 1688,747 1676,756 1692,758 1717,756 1710,772 1722,765 1744,762 1755,781 1767,794 1782,805 1819,799 1828,767 1846,767 1880,778 1898,792 1918,808"/><polyline points="1488,1011 1487,1002 1464,993 1442,985 1422,985 1406,985 1384,994 1364,1011"/><polyline points="1108,1011 1097,1008 1063,994 1035,987 1001,991 970,977 945,964 925,948 905,940 900,935 893,920 901,904 928,884 940,852 930,834 915,808 921,788 941,764 933,754 909,772 901,756 881,740 861,744 829,756 797,766 765,754 749,762 725,754 693,770 673,778 649,766 609,763 569,770 537,778 477,788"/><polyline points="1917,204 1901,197 1888,190 1881,186 1864,169 1848,169 1836,174 1831,186 1822,202 1813,212 1798,225 1784,239 1787,246 1789,263 1784,274 1770,286 1752,294 1745,300 1738,322 1734,363 1718,380 1705,400 1705,425 1685,437 1705,454 1714,479 1722,500 1739,500 1756,511 1814,514 1859,511 1872,497 1907,480 1917,470"/></g>
<g fill="none" stroke="#034474" stroke-width="24" stroke-opacity="0.6"><polygon points="862,400 866,406 866,424 870,447 867,466 858,484 854,500 837,492 836,479 829,466 827,440 833,427 850,419 859,416"/><polygon points="854,509 868,515 874,531 881,552 876,578 874,612 868,633 847,628 834,649 819,641 816,604 819,578 808,547 810,521 816,531 832,531 847,515"/><polygon points="1002,711 1005,699 1014,691 1020,698 1030,693 1040,689 1050,696 1060,703 1074,699 1095,698 1112,691 1130,687 1144,684 1135,701 1125,721 1123,739 1131,754 1123,776 1095,768 1081,754 1060,749 1034,732 1013,725 1003,719"/><polygon points="541,626 565,593 580,587 592,603 593,616 575,626"/><polygon points="607,582 620,580 632,593 625,594"/><polygon points="491,640 500,636 509,641 503,652 493,650"/><polygon points="1506,854 1508,838 1515,833 1517,841 1529,842 1534,838 1539,846 1542,850 1556,847 1573,848 1581,852 1607,852 1608,861 1628,856 1632,854 1631,867 1612,870 1589,871 1563,875 1561,867 1550,863 1530,859 1509,857"/><polygon points="1716,790 1720,795 1714,808 1704,820 1697,821 1698,812 1706,800"/><polygon points="1675,820 1668,838 1666,848 1660,850 1672,845"/><polygon points="1620,628 1632,620 1645,622 1643,636 1632,645 1622,640"/><polygon points="1629,662 1640,661 1647,675 1642,690 1632,688 1634,675"/><polygon points="1645,712 1655,710 1665,716 1657,722 1647,720"/><polygon points="1363,686 1372,672 1381,684 1375,696"/><polygon points="1330,596 1340,593 1351,618 1345,620"/><polygon points="1374,707 1385,706 1389,718 1380,720"/><polygon points="1081,811 1090,812 1098,824 1092,825"/><polygon points="1917,861 1905,870 1903,880 1912,886 1917,886"/><polygon points="1553,583 1567,580 1570,592 1558,595"/><polygon points="1556,539 1565,537 1566,547 1557,548"/><polygon points="1485,645 1495,642 1515,659 1532,666 1540,683 1552,694 1549,702 1535,690 1520,677 1504,668 1488,656"/><polygon points="1085,262 1088,259 1094,280 1098,300 1095,303 1089,285"/><polygon points="1103,290 1106,288 1113,300 1118,311 1114,310"/><polygon points="1101,316 1106,317 1128,334 1150,354 1154,360 1149,360 1126,340 1104,322"/><polygon points="1174,377 1190,377 1203,382 1195,384 1180,381"/><polygon points="1182,389 1200,390 1213,394 1197,394"/><polygon points="1593,554 1600,552 1604,557 1597,559"/><polygon points="1604,572 1612,570 1618,574 1608,577"/><polygon points="1546,646 1553,644 1559,655 1551,657"/><polygon points="1558,704 1564,702 1580,722 1576,727 1566,716"/><polygon points="1540,720 1545,719 1546,727 1541,726"/><polygon points="1543,732 1548,731 1549,741 1544,740"/><polygon points="1541,772 1552,770 1554,777 1544,778"/><polygon points="1566,729 1571,728 1572,736 1567,735"/><polygon points="1590,745 1598,743 1600,755 1592,756"/><polygon points="1578,748 1585,747 1586,755 1579,755"/><polygon points="1583,790 1590,788 1589,795"/><polygon points="1605,762 1618,757 1615,765"/><polygon points="1661,765 1672,762 1679,766 1668,773"/><polygon points="1620,724 1628,720 1634,721 1625,726"/><polygon points="1497,737 1508,736 1505,741"/><polygon points="1501,715 1507,714 1506,720"/><polygon points="925,440 930,438 933,444"/><polygon points="929,444 937,441 942,447 933,448"/></g>
<ellipse cx="1120" cy="330" rx="90" ry="140" fill="#03447a" opacity="0.7"/>
<ellipse cx="1290" cy="820" rx="190" ry="130" fill="#002b4e" opacity="0.45"/>
<ellipse cx="1040" cy="975" rx="110" ry="30" fill="#0a4778" opacity="0.5"/>
<ellipse cx="950" cy="920" rx="40" ry="50" fill="#0a4778" opacity="0.5"/>
</g><rect x="477" y="75" width="1441" height="936" filter="url(#sn)"/></g>
<g fill="none" stroke="#9cc0cc" stroke-width="1.2" stroke-opacity="0.8"><polyline points="477,524 535,500 565,479 582,455 585,442 574,427 574,400 582,385 598,376 619,365 641,368 665,373 683,388 716,397 735,388 744,373 765,359 789,348 807,336 820,318 833,312 859,318 892,336 904,358 914,385 915,406 929,408 940,424 946,438 967,457 986,471 1009,489 1030,506 1058,513 1069,520 1075,532 1090,544 1112,553 1118,571 1142,581 1154,599 1169,635 1174,650 1157,662 1154,678 1145,690 1148,702 1160,705 1169,699 1187,675 1196,653 1218,641 1215,620 1200,605 1187,596 1190,581 1200,562 1215,553 1239,562 1257,581 1269,594 1277,575 1260,556 1236,538 1211,523 1200,513 1167,501 1160,489 1170,480 1167,468 1151,468 1133,468 1119,461 1098,447 1079,424 1067,401 1060,382 1049,361 1030,347 1009,336 995,320 991,299 993,287 1002,274 996,244 1008,232 1033,226 1054,224 1061,230 1061,237 1050,243 1051,247 1056,268 1068,288 1080,274 1086,253 1098,256 1112,276 1114,293 1122,306 1139,322 1127,325 1142,342 1159,358 1165,368 1185,370 1205,378 1221,395 1242,408 1275,432 1302,450 1327,474 1321,499 1318,520 1315,550 1321,565 1339,593 1354,620 1375,641 1380,654 1392,668 1400,680 1414,682 1426,679 1445,679 1457,677 1467,685 1481,690 1488,694 1479,699 1457,691 1439,685 1426,683 1408,690 1397,707 1406,719 1417,748 1423,767 1431,770 1442,758 1453,786 1461,773 1468,784 1487,789 1479,764 1471,727 1485,735 1504,733 1488,717 1479,705 1488,701 1501,705 1516,700 1529,717 1530,691 1516,679 1498,666 1476,651 1462,649 1462,642 1475,636 1475,626 1496,632 1487,622 1475,605 1466,591 1463,573 1464,556 1477,547 1482,556 1497,566 1500,580 1512,586 1508,570 1516,574 1525,586 1527,571 1521,559 1534,577 1545,576 1530,556 1523,552 1515,540 1536,535 1548,528 1562,531 1576,523 1597,531 1618,535 1621,545 1649,547 1654,549 1628,566 1626,580 1625,598 1623,613 1660,609 1649,623 1656,641 1665,650 1654,661 1665,672 1672,677 1656,679 1634,684 1661,693 1674,702 1674,717 1667,722 1676,735 1688,747 1676,756 1692,758 1717,756 1710,772 1722,765 1744,762 1755,781 1767,794 1782,805 1819,799 1828,767 1846,767 1880,778 1898,792 1918,808"/><polyline points="1488,1011 1487,1002 1464,993 1442,985 1422,985 1406,985 1384,994 1364,1011"/><polyline points="1108,1011 1097,1008 1063,994 1035,987 1001,991 970,977 945,964 925,948 905,940 900,935 893,920 901,904 928,884 940,852 930,834 915,808 921,788 941,764 933,754 909,772 901,756 881,740 861,744 829,756 797,766 765,754 749,762 725,754 693,770 673,778 649,766 609,763 569,770 537,778 477,788"/><polyline points="1917,204 1901,197 1888,190 1881,186 1864,169 1848,169 1836,174 1831,186 1822,202 1813,212 1798,225 1784,239 1787,246 1789,263 1784,274 1770,286 1752,294 1745,300 1738,322 1734,363 1718,380 1705,400 1705,425 1685,437 1705,454 1714,479 1722,500 1739,500 1756,511 1814,514 1859,511 1872,497 1907,480 1917,470"/><polygon points="1657,552 1677,531 1722,521 1756,524 1770,538 1749,552 1773,559 1739,562 1708,562 1681,562"/></g>
<g fill="#a3bb8b" stroke="#9cc0cc" stroke-width="1.2" stroke-opacity="0.8">
<polygon points="862,400 866,406 866,424 870,447 867,466 858,484 854,500 837,492 836,479 829,466 827,440 833,427 850,419 859,416"/>
<polygon points="854,509 868,515 874,531 881,552 876,578 874,612 868,633 847,628 834,649 819,641 816,604 819,578 808,547 810,521 816,531 832,531 847,515"/>
<polygon points="1002,711 1005,699 1014,691 1020,698 1030,693 1040,689 1050,696 1060,703 1074,699 1095,698 1112,691 1130,687 1144,684 1135,701 1125,721 1123,739 1131,754 1123,776 1095,768 1081,754 1060,749 1034,732 1013,725 1003,719"/>
<polygon points="541,626 565,593 580,587 592,603 593,616 575,626"/>
<polygon points="607,582 620,580 632,593 625,594"/>
<polygon points="491,640 500,636 509,641 503,652 493,650"/>
<polygon points="1506,854 1508,838 1515,833 1517,841 1529,842 1534,838 1539,846 1542,850 1556,847 1573,848 1581,852 1607,852 1608,861 1628,856 1632,854 1631,867 1612,870 1589,871 1563,875 1561,867 1550,863 1530,859 1509,857"/>
<polygon points="1716,790 1720,795 1714,808 1704,820 1697,821 1698,812 1706,800"/>
<polygon points="1675,820 1668,838 1666,848 1660,850 1672,845"/>
<polygon points="1620,628 1632,620 1645,622 1643,636 1632,645 1622,640"/>
<polygon points="1629,662 1640,661 1647,675 1642,690 1632,688 1634,675"/>
<polygon points="1645,712 1655,710 1665,716 1657,722 1647,720"/>
<polygon points="1363,686 1372,672 1381,684 1375,696"/>
<polygon points="1330,596 1340,593 1351,618 1345,620"/>
<polygon points="1374,707 1385,706 1389,718 1380,720"/>
<polygon points="1081,811 1090,812 1098,824 1092,825"/>
<polygon points="1917,861 1905,870 1903,880 1912,886 1917,886"/>
<polygon points="1553,583 1567,580 1570,592 1558,595"/>
<polygon points="1556,539 1565,537 1566,547 1557,548"/>
<polygon points="1485,645 1495,642 1515,659 1532,666 1540,683 1552,694 1549,702 1535,690 1520,677 1504,668 1488,656"/>
<polygon points="1085,262 1088,259 1094,280 1098,300 1095,303 1089,285"/>
<polygon points="1103,290 1106,288 1113,300 1118,311 1114,310"/>
<polygon points="1101,316 1106,317 1128,334 1150,354 1154,360 1149,360 1126,340 1104,322"/>
<polygon points="1174,377 1190,377 1203,382 1195,384 1180,381"/>
<polygon points="1182,389 1200,390 1213,394 1197,394"/>
<polygon points="1593,554 1600,552 1604,557 1597,559"/>
<polygon points="1604,572 1612,570 1618,574 1608,577"/>
<polygon points="1546,646 1553,644 1559,655 1551,657"/>
<polygon points="1558,704 1564,702 1580,722 1576,727 1566,716"/>
<polygon points="1540,720 1545,719 1546,727 1541,726"/>
<polygon points="1543,732 1548,731 1549,741 1544,740"/>
<polygon points="1541,772 1552,770 1554,777 1544,778"/>
<polygon points="1566,729 1571,728 1572,736 1567,735"/>
<polygon points="1590,745 1598,743 1600,755 1592,756"/>
<polygon points="1578,748 1585,747 1586,755 1579,755"/>
<polygon points="1583,790 1590,788 1589,795"/>
<polygon points="1605,762 1618,757 1615,765"/>
<polygon points="1661,765 1672,762 1679,766 1668,773"/>
<polygon points="1620,724 1628,720 1634,721 1625,726"/>
<polygon points="1497,737 1508,736 1505,741"/>
<polygon points="1501,715 1507,714 1506,720"/>
<polygon points="925,440 930,438 933,444"/>
<polygon points="929,444 937,441 942,447 933,448"/>
</g>
<clipPath id="isl"><polygon points="862,400 866,406 866,424 870,447 867,466 858,484 854,500 837,492 836,479 829,466 827,440 833,427 850,419 859,416"/><polygon points="854,509 868,515 874,531 881,552 876,578 874,612 868,633 847,628 834,649 819,641 816,604 819,578 808,547 810,521 816,531 832,531 847,515"/><polygon points="1002,711 1005,699 1014,691 1020,698 1030,693 1040,689 1050,696 1060,703 1074,699 1095,698 1112,691 1130,687 1144,684 1135,701 1125,721 1123,739 1131,754 1123,776 1095,768 1081,754 1060,749 1034,732 1013,725 1003,719"/><polygon points="541,626 565,593 580,587 592,603 593,616 575,626"/><polygon points="607,582 620,580 632,593 625,594"/><polygon points="491,640 500,636 509,641 503,652 493,650"/><polygon points="1506,854 1508,838 1515,833 1517,841 1529,842 1534,838 1539,846 1542,850 1556,847 1573,848 1581,852 1607,852 1608,861 1628,856 1632,854 1631,867 1612,870 1589,871 1563,875 1561,867 1550,863 1530,859 1509,857"/><polygon points="1716,790 1720,795 1714,808 1704,820 1697,821 1698,812 1706,800"/><polygon points="1675,820 1668,838 1666,848 1660,850 1672,845"/><polygon points="1620,628 1632,620 1645,622 1643,636 1632,645 1622,640"/><polygon points="1629,662 1640,661 1647,675 1642,690 1632,688 1634,675"/><polygon points="1645,712 1655,710 1665,716 1657,722 1647,720"/><polygon points="1363,686 1372,672 1381,684 1375,696"/><polygon points="1330,596 1340,593 1351,618 1345,620"/><polygon points="1374,707 1385,706 1389,718 1380,720"/><polygon points="1081,811 1090,812 1098,824 1092,825"/><polygon points="1917,861 1905,870 1903,880 1912,886 1917,886"/><polygon points="1553,583 1567,580 1570,592 1558,595"/><polygon points="1556,539 1565,537 1566,547 1557,548"/><polygon points="1485,645 1495,642 1515,659 1532,666 1540,683 1552,694 1549,702 1535,690 1520,677 1504,668 1488,656"/><polygon points="1085,262 1088,259 1094,280 1098,300 1095,303 1089,285"/><polygon points="1103,290 1106,288 1113,300 1118,311 1114,310"/><polygon points="1101,316 1106,317 1128,334 1150,354 1154,360 1149,360 1126,340 1104,322"/><polygon points="1174,377 1190,377 1203,382 1195,384 1180,381"/><polygon points="1182,389 1200,390 1213,394 1197,394"/><polygon points="1593,554 1600,552 1604,557 1597,559"/><polygon points="1604,572 1612,570 1618,574 1608,577"/><polygon points="1546,646 1553,644 1559,655 1551,657"/><polygon points="1558,704 1564,702 1580,722 1576,727 1566,716"/><polygon points="1540,720 1545,719 1546,727 1541,726"/><polygon points="1543,732 1548,731 1549,741 1544,740"/><polygon points="1541,772 1552,770 1554,777 1544,778"/><polygon points="1566,729 1571,728 1572,736 1567,735"/><polygon points="1590,745 1598,743 1600,755 1592,756"/><polygon points="1578,748 1585,747 1586,755 1579,755"/><polygon points="1583,790 1590,788 1589,795"/><polygon points="1605,762 1618,757 1615,765"/><polygon points="1661,765 1672,762 1679,766 1668,773"/><polygon points="1620,724 1628,720 1634,721 1625,726"/><polygon points="1497,737 1508,736 1505,741"/><polygon points="1501,715 1507,714 1506,720"/><polygon points="925,440 930,438 933,444"/><polygon points="929,444 937,441 942,447 933,448"/></clipPath>
<g clip-path="url(#isl)"><g filter="url(#bl2)"><polygon points="840,420 868,410 870,470 858,495 838,480" fill="#7a986a" opacity="0.6"/><polygon points="1010,695 1130,687 1125,720 1060,715" fill="#8aa676" opacity="0.4"/><polygon points="1508,838 1540,845 1630,856 1610,870 1560,872 1510,856" fill="#859f70" opacity="0.45"/></g><rect x="477" y="75" width="1441" height="936" filter="url(#mt)" opacity="0.75"/><rect x="477" y="75" width="1441" height="936" filter="url(#lt)" opacity="0.4"/><rect x="477" y="75" width="1441" height="936" filter="url(#nz)" opacity="0.9"/></g>
<g fill="#03467e" stroke="#8fb4c4" stroke-width="0.8" stroke-opacity="0.7">
<polygon points="1871,170 1888,167 1906,171 1900,177 1880,178"/>
<polygon points="1886,148 1890,150 1892,168 1886,168"/>
<polygon points="1850,140 1853,141 1856,168 1850,168"/>
<polygon points="1806,186 1812,184 1818,195 1822,203 1814,198"/>
<polygon points="1782,224 1785,223 1788,242 1783,242"/>
<polygon points="1736,232 1739,232 1742,256 1737,256"/>
<polygon points="1753,238 1757,236 1760,250 1754,250"/>
<polygon points="1725,245 1729,244 1730,252 1726,252"/>
<polygon points="1747,276 1757,273 1763,282 1755,291 1749,288"/>
<polygon points="981,392 986,389 991,392 987,396"/>
<polygon points="974,425 978,422 981,426 977,429"/>
<polygon points="988,455 992,452 995,455 991,458"/>
<polygon points="840,93 852,89 877,108 870,110 850,102"/>
<polygon points="716,192 725,180 740,176 750,182 738,187 722,194"/>
<polygon points="738,156 750,142 757,137 752,150"/>
<polygon points="823,224 830,210 836,200 832,216"/>
<polygon points="843,205 850,215 852,223 846,212"/>
<polygon points="915,244 921,230 928,219 926,235 918,246"/>
<polygon points="1221,163 1240,150 1258,140 1261,146 1245,157 1225,164"/>
<polygon points="1305,448 1315,444 1322,455 1313,459"/>
<polygon points="1374,524 1380,520 1384,530 1382,538 1376,536"/>
<polygon points="1385,528 1392,526 1396,536 1390,541 1386,538"/>
<polygon points="1835,687 1842,686 1846,700 1843,708 1838,700"/>
<polygon points="1787,711 1793,707 1801,706 1795,713"/>
<polygon points="1770,556 1778,553 1788,556 1784,561 1772,561"/>
<polygon points="1703,572 1708,569 1712,573 1706,575"/>
<polygon points="1730,572 1737,570 1742,575 1734,577"/>
<polygon points="1803,716 1810,713 1814,718 1806,720"/>
<polygon points="1862,668 1866,666 1868,674 1863,675"/>
<polygon points="1859,706 1866,704 1877,718 1872,722 1862,716"/>
<polygon points="789,938 805,926 835,927 853,935 840,940 825,950 812,956 795,950"/>
<polygon points="706,924 718,910 729,914 724,926 712,932"/>
<polygon points="590,858 600,852 604,855 594,864"/>
<polygon points="554,874 563,870 572,870 564,878 556,878"/>
<polygon points="477,892 486,891 488,900 480,909 477,905"/>
<polygon points="646,847 652,844 657,845 650,849"/>
<polygon points="898,822 902,819 904,825 899,828"/>
<polygon points="743,828 748,825 752,828 747,831"/>
</g>
</svg>
</div>
<div class="a" style="left:476px;top:45px;width:1px;height:967px;background:#fff"></div>
<div class="a" style="left:477px;top:1011px;width:1441px;height:2px;background:#a0a0a0"></div>
<div class="a" style="left:1917px;top:44px;width:3px;height:969px;background:#a0a0a0"></div>

<div id="status">
<div class="sp" style="left:0px;width:99px"></div><span style="left:6px">MapsID: 3726</span>
<div class="sp" style="left:102px;width:77px"></div><span style="left:104px">jpg</span>
<div class="sp" style="left:182px;width:97px"></div><span style="left:184px">MinZoom: 1</span>
<div class="sp" style="left:282px;width:97px"></div><span style="left:284px">MaxZoom: 14</span>
<div class="sp" style="left:382px;width:97px"></div><span style="left:384px">TileSize: 256</span>
<div class="sp" style="left:482px;width:97px"></div><span style="left:484px">EPSG:3857</span>
<div class="sp" style="left:582px;width:1338px"></div><span style="left:584px;font-size:13.05px">Longitude=17.358398, Latitude=40.813809, tile=6/35/24.jpg</span>
</div>

</body></html>
